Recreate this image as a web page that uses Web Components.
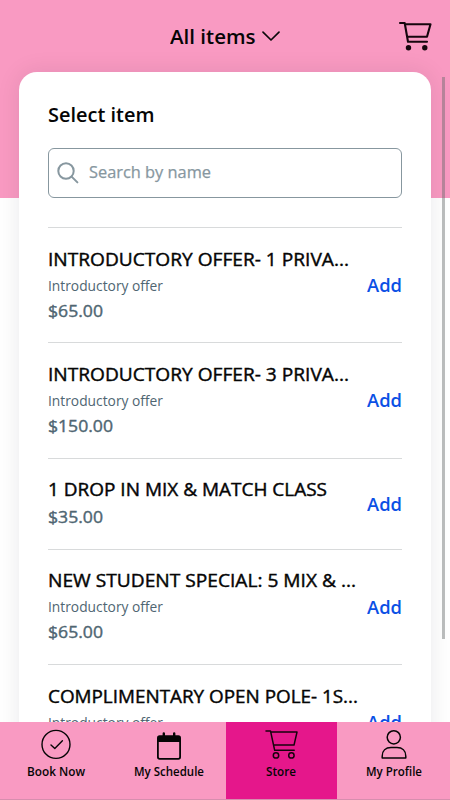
<!DOCTYPE html>
<html lang="en"><head><meta charset="utf-8"><title>Store</title>
<style>html,body{margin:0;height:100%;overflow:hidden;background:#fff}body{font-family:"Open Sans","Noto Sans",sans-serif;color:#050505}</style></head>
<body><store-app></store-app>
<script>
const define=(name,html,after)=>customElements.define(name,class extends HTMLElement{
  connectedCallback(){
    if(this.shadowRoot)return;
    const t=document.createElement('template');
    t.innerHTML=typeof html==='function'?html(this):html;
    this.attachShadow({mode:'open'}).append(t.content.cloneNode(true));
    if(after)after(this);
  }
});
// A single line of text stretched to a given width.
define('fit-text',el=>`<style>:host{display:block;white-space:nowrap;width:${el.getAttribute('w')}px}span{display:inline-block;vertical-align:top;transform-origin:0 50%}</style><span>${el.getAttribute('text').replace(/&/g,'&amp;')}</span>`,el=>{
  const s=el.shadowRoot.querySelector('span');
  s.style.transform='scaleX('+(+el.getAttribute('w')/s.getBoundingClientRect().width).toFixed(4)+')';
});
const icons={
 chevron:`<svg width="18" height="11" viewBox="0 0 18 11" fill="none" stroke="#0a0a0a" stroke-width="1.7" stroke-linecap="round" stroke-linejoin="round"><path d="M1 1.2 9 9 17 1.2"/></svg>`,
 cart:`<svg width="33" height="30" viewBox="0 0 33 30" fill="none" stroke="#16060d" stroke-width="2.1" stroke-linecap="round" stroke-linejoin="round"><path d="M1 2H5.7L9 20.7H28M6.3 3.3H31.5L28 15.8H8.2"/><g fill="#16060d" stroke="none"><circle cx="9.5" cy="26.7" r="2.7"/><circle cx="25.8" cy="26.7" r="2.7"/></g></svg>`,
 search:`<svg width="22" height="22" viewBox="0 0 22 22" fill="none" stroke="#87979f" stroke-width="2" stroke-linecap="round"><circle cx="9" cy="9" r="7.7"/><path d="M14.6 14.6 20.4 20.4"/></svg>`,
 book:`<svg width="30" height="30" viewBox="0 0 30 30" fill="none" stroke="#050505" stroke-width="1.4" stroke-linecap="round" stroke-linejoin="round"><circle cx="15" cy="15.4" r="14"/><path d="M10 15.9 13.8 19.4 21.4 11.8"/></svg>`,
 calendar:`<svg width="26" height="30" viewBox="0 0 26 30"><path fill="#050505" fill-rule="evenodd" d="M6.6 4.4a1.2 1.2 0 0 1 2.4 0V6.2H17V4.4a1.2 1.2 0 0 1 2.4 0V6.2H22.3a2.7 2.7 0 0 1 2.7 2.7V28a2.7 2.7 0 0 1-2.7 2.7H3.7A2.7 2.7 0 0 1 1 28V8.9A2.7 2.7 0 0 1 3.7 6.2H6.6ZM2.8 13V28a1 1 0 0 0 1 1H22.2a1 1 0 0 0 1-1V13Z"/></svg>`,
 store:`<svg width="33" height="30" viewBox="0 0 33 30" fill="none" stroke="#16020c" stroke-width="1.5" stroke-linecap="round" stroke-linejoin="round"><path d="M1 1.9H5.5L9.7 21.3H29.2M5.8 3.1H32L29 16.1H8.5"/><circle cx="11" cy="26.4" r="2.7"/><circle cx="26.4" cy="26.4" r="2.7"/></svg>`,
 profile:`<svg width="26" height="30" viewBox="0 0 26 30" fill="none" stroke="#050505" stroke-width="1.5" stroke-linejoin="round"><circle cx="12.8" cy="8.3" r="6.6"/><path d="M1.2 29V27.2C1.2 21.8 4.8 18.6 10 18.6H16C21.2 18.6 24.8 21.8 24.8 27.2V29Z"/></svg>`
};
define('ui-icon',el=>`<style>:host{display:block;flex:none}svg{display:block;overflow:visible}</style>${icons[el.getAttribute('name')]}`);
define('top-bar',`<style>:host{display:grid;grid-template-columns:1fr auto 1fr;height:72px;align-items:center}
.t{display:flex;align-items:center;gap:6px;font-size:19px;font-weight:600;line-height:28px}.t fit-text{padding-top:1px}ui-icon.c{justify-self:end;margin-right:18px}</style>
<span></span><div class="t"><fit-text w="85.5" text="All items"></fit-text><ui-icon name="chevron"></ui-icon></div><ui-icon class="c" name="cart"></ui-icon>`);
define('search-box',`<style>:host{box-sizing:border-box;display:flex;align-items:center;height:50px;border:1.4px solid #87979f;border-radius:6px;padding-left:8px;gap:10px;color:#87979f;font-size:16px;line-height:24px;-webkit-text-stroke:.25px}fit-text{margin-top:-2px}</style>
<ui-icon name="search"></ui-icon><fit-text w="122" text="Search by name"></fit-text>`);
define('item-row',el=>{
 const a=n=>el.getAttribute(n);
 return `<style>:host{box-sizing:border-box;display:flex;align-items:center;justify-content:space-between;height:${a('note')?115.3:91}px;border-top:1px solid #d8dadb}
 .i{display:grid;grid-auto-rows:max-content;height:${a('note')?79:55.5}px}.n{font-size:17.4px;line-height:27px;-webkit-text-stroke:.4px}.s{font-size:14px;line-height:25px;color:#4f6672}.p{font-size:16.8px;line-height:26px;color:#4f6672;-webkit-text-stroke:.4px}.a{font-size:17.5px;font-weight:600;line-height:26px;color:#0b50e5}.x{margin-top:1.5px}</style>
 <div class="i"><fit-text class="n" w="${a('w')}" text="${a('name')}"></fit-text>${a('note')?`<fit-text class="s" w="115" text="${a('note')}"></fit-text>`:''}${a('price')?`<fit-text class="p ${a('note')?'':'x'}" w="${a('price').length>6?65:55}" text="${a('price')}"></fit-text>`:''}</div><fit-text class="a" w="35" text="Add"></fit-text>`});
define('item-card',`<style>:host{display:block;box-sizing:border-box;margin:0 19px;padding:30px 29px 0;height:760px;background:#fff;border-radius:18px;box-shadow:0 0 24px rgba(20,25,35,.09)}
h1{margin:0 0 19px;font-size:19px;font-weight:600;line-height:27px}search-box{margin-bottom:29px}</style>
<h1><fit-text w="106.5" text="Select item"></fit-text></h1><search-box></search-box><slot></slot>`);
define('nav-tab',el=>`<style>:host{display:flex;flex-direction:column;align-items:center;padding-top:7px;box-sizing:border-box;font-size:11.6px;font-weight:600;line-height:17px;gap:4px;background:${el.hasAttribute('active')?'#e5178b':'transparent'}}</style>
<ui-icon name="${el.getAttribute('icon')}"></ui-icon><fit-text w="${el.getAttribute('w')}" text="${el.getAttribute('label')}"></fit-text>`);
define('tab-bar',`<style>:host{display:grid;grid-template-columns:112.5px 113px 111.5px 113px;height:78px;flex:none;background:#f99ac2;box-sizing:border-box;border-bottom:1px solid #d68eae}</style><slot></slot>`);
define('store-app',`<style>:host{display:flex;flex-direction:column;height:800px;width:450px;position:relative;overflow:hidden}
main{flex:1;min-height:0;overflow:hidden;background:linear-gradient(#f99ac2 198px,#fff 198px)}
.bar{position:absolute;left:441.6px;top:77px;width:3.8px;height:562px;background:rgba(100,105,105,.44)}</style>
<main><top-bar></top-bar><item-card>
<item-row name="INTRODUCTORY OFFER- 1 PRIVA..." w="301" note="Introductory offer" price="$65.00"></item-row>
<item-row name="INTRODUCTORY OFFER- 3 PRIVA..." w="301" note="Introductory offer" price="$150.00"></item-row>
<item-row name="1 DROP IN MIX & MATCH CLASS" w="279" price="$35.00"></item-row>
<item-row name="NEW STUDENT SPECIAL: 5 MIX & ..." w="308" note="Introductory offer" price="$65.00"></item-row>
<item-row name="COMPLIMENTARY OPEN POLE- 1S..." w="310" note="Introductory offer"></item-row>
</item-card></main><div class="bar"></div>
<tab-bar><nav-tab icon="book" label="Book Now" w="58"></nav-tab><nav-tab icon="calendar" label="My Schedule" w="70"></nav-tab><nav-tab active icon="store" label="Store" w="30"></nav-tab><nav-tab icon="profile" label="My Profile" w="56"></nav-tab></tab-bar>`);
</script></body></html>
